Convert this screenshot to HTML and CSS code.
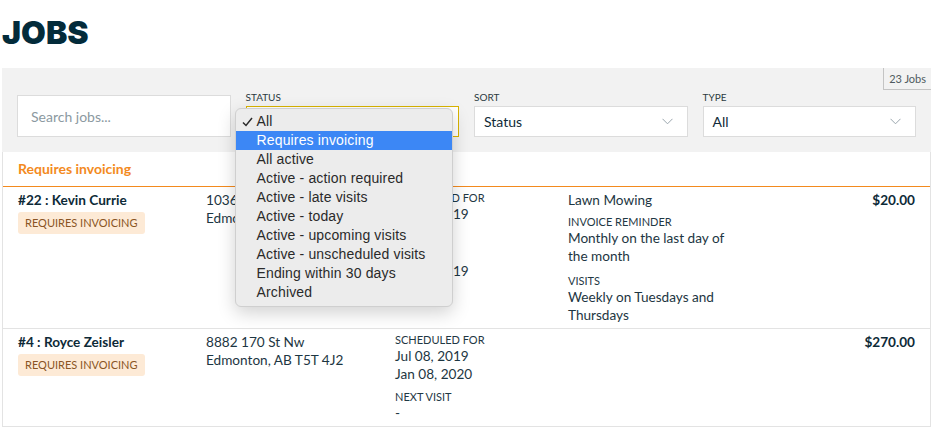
FILE: index.html
```html
<!DOCTYPE html>
<html lang="en">
<head>
    <meta charset="UTF-8">
    <meta name="viewport" content="width=device-width, initial-scale=1.0">
    <title>Jobs</title>
    <link rel="stylesheet" href="styles.css">
</head>
<body>

<div class="page">
    <h1 class="title">JOBS</h1>

    <div class="filters">
        <span class="count">23 Jobs</span>
        <div class="field search-field">
            <input type="text" class="search" placeholder="Search jobs...">
        </div>
        <div class="field">
            <label>Status</label>
            <div class="select-wrap">
                <div class="select focused"></div>
                <ul class="menu">
                    <li class="checked">
                        <svg class="check" width="11" height="10" viewBox="0 0 11 10"><path d="M1 5.5 L4 8.5 L10 1" fill="none" stroke="#2a2a2a" stroke-width="1.5"/></svg>
                        All
                    </li>
                    <li class="active">Requires invoicing</li>
                    <li>All active</li>
                    <li>Active - action required</li>
                    <li>Active - late visits</li>
                    <li>Active - today</li>
                    <li>Active - upcoming visits</li>
                    <li>Active - unscheduled visits</li>
                    <li>Ending within 30 days</li>
                    <li>Archived</li>
                </ul>
            </div>
        </div>
        <div class="field">
            <label>Sort</label>
            <div class="select">
                <span>Status</span>
                <svg class="chevron" width="11" height="7" viewBox="0 0 11 7"><path d="M0.5 0.8 L5.5 5.8 L10.5 0.8" fill="none" stroke="#9aa6ad" stroke-width="1"/></svg>
            </div>
        </div>
        <div class="field">
            <label>Type</label>
            <div class="select">
                <span>All</span>
                <svg class="chevron" width="11" height="7" viewBox="0 0 11 7"><path d="M0.5 0.8 L5.5 5.8 L10.5 0.8" fill="none" stroke="#9aa6ad" stroke-width="1"/></svg>
            </div>
        </div>
    </div>

    <div class="list">
        <div class="group-title">Requires invoicing</div>

        <div class="job">
            <div class="col">
                <div class="name">#22 : Kevin Currie</div>
                <span class="badge">Requires invoicing</span>
            </div>
            <div class="col">
                <div>10362 82 Ave Nw</div>
                <div>Edmonton, AB T6E 2A3</div>
            </div>
            <div class="col">
                <div class="label">Scheduled for</div>
                <div>Jul 09, 2019</div>
                <div>Ongoing</div>
                <div class="label spaced">Next visit</div>
                <div>Jul 16, 2019</div>
            </div>
            <div class="col details">
                <div>Lawn Mowing</div>
                <div class="detail">
                    <div class="label">Invoice reminder</div>
                    <div>Monthly on the last day of the month</div>
                </div>
                <div class="detail">
                    <div class="label">Visits</div>
                    <div>Weekly on Tuesdays and Thursdays</div>
                </div>
            </div>
            <div class="col price">$20.00</div>
        </div>

        <div class="job">
            <div class="col">
                <div class="name">#4 : Royce Zeisler</div>
                <span class="badge">Requires invoicing</span>
            </div>
            <div class="col">
                <div>8882 170 St Nw</div>
                <div>Edmonton, AB T5T 4J2</div>
            </div>
            <div class="col">
                <div class="label">Scheduled for</div>
                <div>Jul 08, 2019</div>
                <div>Jan 08, 2020</div>
                <div class="label spaced">Next visit</div>
                <div>-</div>
            </div>
            <div class="col details"></div>
            <div class="col price">$270.00</div>
        </div>
    </div>
</div>

</body>
</html>
```

FILE: styles.css
```css
body {
    margin: 0;
    font-family: Lato, "Open Sans", sans-serif;
    font-size: 13.6px;
    color: #1d3642;
    background-color: #fff;
}
.page {
    padding: 0 7px 0 2px;
}
.title {
    margin: 0;
    height: 68px;
    padding-top: 13px;
    box-sizing: border-box;
    font-family: Inter, Lato, sans-serif;
    font-size: 32px;
    font-weight: 900;
    line-height: 40px;
    color: #032b3a;
}
.filters {
    position: relative;
    display: grid;
    grid-template-columns: repeat(4, 1fr);
    column-gap: 15px;
    align-items: end;
    padding: 24px 15px 15px 15px;
    background-color: #f2f2f2;
}
.count {
    position: absolute;
    top: 0;
    right: 0;
    padding: 0 5px;
    height: 21px;
    line-height: 21px;
    font-size: 11px;
    color: #4f5a60;
    border-left: 1px solid #c4c4c4;
    border-bottom: 1px solid #c4c4c4;
}
.field label {
    display: block;
    margin-bottom: 4px;
    font-size: 10px;
    line-height: 10px;
    text-transform: uppercase;
    color: #2c3a41;
}
.search {
    display: block;
    width: 100%;
    height: 42px;
    padding: 0 13px;
    box-sizing: border-box;
    border: 1px solid #dcdcdc;
    font-family: inherit;
    font-size: 14px;
    color: #1d3642;
    background-color: #fff;
}
.search::placeholder {
    color: #8b99a1;
}
.select-wrap {
    position: relative;
}
.select {
    display: flex;
    align-items: center;
    justify-content: space-between;
    height: 31px;
    padding: 0 14px 0 9px;
    box-sizing: border-box;
    border: 1px solid #dcdcdc;
    background-color: #fff;
    color: #0f2b38;
    font-size: 14px;
}
.select.focused {
    border-color: #d9b400;
}
.menu {
    position: absolute;
    top: 2px;
    left: -11px;
    width: 218px;
    margin: 0;
    padding: 3px 0 4px 0;
    box-sizing: border-box;
    list-style: none;
    background-color: #ececec;
    border: 1px solid #cfcfcf;
    border-radius: 6px;
    box-shadow: 0 6px 18px rgba(0, 0, 0, 0.18);
    font-family: "Liberation Sans", Arial, sans-serif;
    font-size: 14px;
    letter-spacing: 0.15px;
    color: #2a2a2a;
}
.menu li {
    position: relative;
    height: 19px;
    line-height: 19px;
    padding-left: 21px;
}
.menu li.active {
    background-color: #3c87f5;
    color: #fff;
}
.menu .check {
    position: absolute;
    left: 6px;
    top: 5px;
}
.list {
    border-left: 1px solid #e3e3e3;
    border-right: 1px solid #e3e3e3;
}
.group-title {
    padding: 8px 15px;
    line-height: 18px;
    font-size: 14px;
    font-weight: 700;
    color: #f38a1e;
    border-bottom: 1px solid #f38a1e;
}
.job {
    display: grid;
    grid-template-columns: 188px 189px 173px 1fr auto;
    padding: 4px 15px 4px 15px;
    line-height: 18px;
    border-bottom: 1px solid #e3e3e3;
}
.name {
    font-weight: 700;
    color: #0d2a37;
}
.badge {
    display: inline-block;
    margin-top: 3px;
    padding: 0 7px;
    height: 22px;
    line-height: 22px;
    border-radius: 3px;
    font-size: 11px;
    text-transform: uppercase;
    color: #8a5524;
    background-color: #fdead6;
}
.label {
    font-size: 11px;
    line-height: 14px;
    text-transform: uppercase;
    color: #1f3844;
}
.label.spaced {
    margin-top: 7px;
}
.details {
    width: 165px;
}
.detail {
    margin-top: 6px;
}
.detail + .detail {
    margin-top: 9px;
}
.price {
    font-weight: 700;
    color: #0d2a37;
    text-align: right;
}
```
